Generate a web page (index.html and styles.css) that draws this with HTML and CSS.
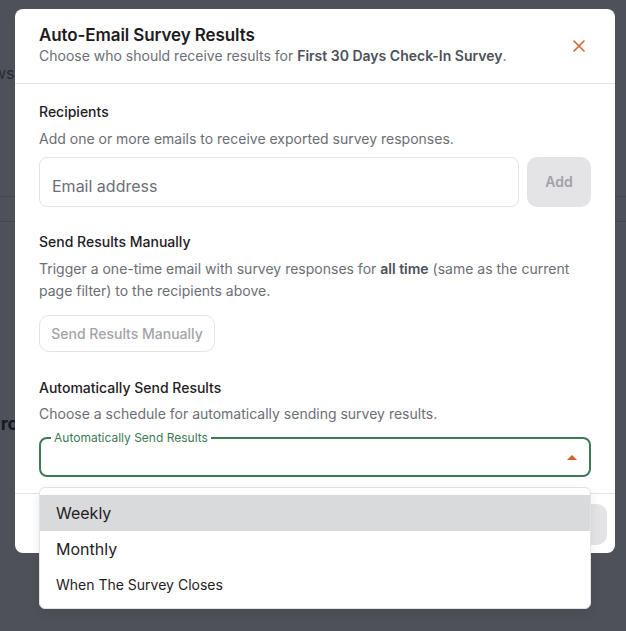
FILE: index.html
```html
<!DOCTYPE html>
<html lang="en">
<head>
<meta charset="utf-8">
<title>Auto-Email Survey Results</title>
<link rel="stylesheet" href="styles.css">
</head>
<body>
<div class="page">
  <div class="page-tabs"><span class="page-tab">Views</span></div>
  <div class="page-band"></div>
  <div class="page-row"></div>
  <div class="page-heading">Pro</div>
</div>
<div class="overlay"></div>
<div class="modal" role="dialog">
  <div class="modal-header">
    <div class="header-text">
      <h2 class="modal-title">Auto-Email Survey Results</h2>
      <p class="modal-subtitle">Choose who should receive results for <strong>First 30 Days Check-In Survey</strong>.</p>
    </div>
    <button class="close-btn" aria-label="Close">
      <svg width="12" height="12" viewBox="0 0 12 12"><path d="M1 1L11 11M11 1L1 11" stroke="#d4652f" stroke-width="1.6" stroke-linecap="round" fill="none"/></svg>
    </button>
  </div>
  <div class="modal-body">
    <section class="section">
      <h3 class="section-title">Recipients</h3>
      <p class="section-desc">Add one or more emails to receive exported survey responses.</p>
      <div class="email-row">
        <div class="email-input">Email address</div>
        <button class="add-btn">Add</button>
      </div>
    </section>
    <section class="section">
      <h3 class="section-title">Send Results Manually</h3>
      <p class="section-desc">Trigger a one-time email with survey responses for <strong>all time</strong> (same as the current page filter) to the recipients above.</p>
      <button class="outline-btn">Send Results Manually</button>
    </section>
    <section class="section section-last">
      <h3 class="section-title">Automatically Send Results</h3>
      <p class="section-desc">Choose a schedule for automatically sending survey results.</p>
      <div class="select-field">
        <fieldset class="select-outline"><legend class="select-legend">Automatically Send Results</legend></fieldset>
        <span class="select-arrow"></span>
      </div>
    </section>
  </div>
  <div class="modal-footer">
    <button class="footer-btn">Cancel</button>
    <button class="footer-btn">Save</button>
  </div>
</div>
<ul class="menu" role="listbox">
  <li class="menu-item menu-item-active">Weekly</li>
  <li class="menu-item">Monthly</li>
  <li class="menu-item menu-item-small">When The Survey Closes</li>
</ul>
</body>
</html>
```
FILE: styles.css
```css
* { box-sizing: border-box; }
html, body { margin: 0; padding: 0; }
body {
  width: 626px;
  height: 631px;
  overflow: hidden;
  font-family: Inter, "Noto Sans", sans-serif;
  background: #ffffff;
  position: relative;
}
.page {
  width: 626px;
  height: 631px;
  display: flex;
  flex-direction: column;
  padding-top: 62px;
  color: #111;
}
.page-tabs {
  display: flex;
  margin-left: -31px;
  font-size: 16px;
  line-height: 22px;
  color: #666;
}
.page-band {
  margin-top: 112px;
  height: 26px;
  border-top: 1px solid #d4d4d8;
  border-bottom: 1px solid #d4d4d8;
  background: #fff;
}
.page-row { height: 190px; }
.page-heading {
  margin-left: -11px;
  font-size: 18px;
  line-height: 24px;
  font-weight: 700;
  color: #222;
}
.overlay {
  position: absolute;
  inset: 0;
  background: rgba(20, 23, 33, 0.75);
}
.modal {
  position: absolute;
  left: 15px;
  top: 9px;
  width: 600px;
  height: 544px;
  background: #fff;
  border-radius: 8px;
  display: flex;
  flex-direction: column;
  overflow: hidden;
}
.modal-header {
  display: flex;
  align-items: center;
  justify-content: space-between;
  padding: 15px 24px 17px 24px;
  border-bottom: 1px solid #e4e4e7;
}
.modal-title {
  margin: 0;
  font-size: 17px;
  line-height: 22px;
  font-weight: 600;
  color: #1c1c21;
  letter-spacing: -0.1px;
}
.modal-subtitle {
  margin: 0;
  font-size: 14px;
  line-height: 20px;
  color: #6b6e76;
}
.modal-subtitle strong { font-weight: 600; color: #4d5058; }
.close-btn {
  border: 0;
  background: none;
  padding: 0;
  width: 12px;
  height: 12px;
  margin-right: 6px;
  margin-top: 2px;
  display: flex;
}
.modal-body {
  padding: 18px 24px 16px 24px;
  display: flex;
  flex-direction: column;
  gap: 25px;
  border-bottom: 1px solid #e4e4e7;
}
.section { display: flex; flex-direction: column; }
.section-last { margin-top: 1px; }
.section-title {
  margin: 0;
  font-size: 14px;
  line-height: 20px;
  font-weight: 500;
  color: #1f2024;
}
.section-desc {
  margin: 6px 0 0 0;
  font-size: 14px;
  line-height: 22px;
  color: #6b6e76;
}
.section-last .section-desc { margin-top: 5px; }
.section-desc strong { font-weight: 600; color: #4d5058; }
.email-row {
  margin-top: 7px;
  display: flex;
  gap: 8px;
}
.email-input {
  flex: 1;
  height: 50px;
  border: 1px solid #e4e4e7;
  border-radius: 8px;
  padding: 0 12px;
  display: flex;
  align-items: center;
  padding-top: 7px;
  font-size: 16px;
  color: #6b6f78;
}
.add-btn {
  width: 64px;
  height: 50px;
  border: 0;
  border-radius: 10px;
  background: #e4e4e7;
  color: #a1a1aa;
  font-family: inherit;
  font-size: 14px;
  font-weight: 600;
  padding-bottom: 2px;
}
.outline-btn {
  margin-top: 13px;
  align-self: flex-start;
  width: 176px;
  height: 37px;
  border: 1px solid #e4e4e7;
  border-radius: 10px;
  background: #fff;
  color: #a3a4aa;
  font-family: inherit;
  font-size: 14px;
  font-weight: 500;
}
.select-field {
  margin-top: 13px;
  position: relative;
  height: 39px;
}
.select-outline {
  position: absolute;
  inset: -6px 0 0 0;
  margin: 0;
  padding: 0 10px;
  border: 2px solid #3d7a57;
  border-radius: 8px;
}
.select-legend {
  padding: 0 3px;
  font-size: 12px;
  line-height: 12px;
  color: #3d7a57;
}
.select-arrow {
  position: absolute;
  right: 14px;
  top: 17px;
  width: 0;
  height: 0;
  border-left: 5px solid transparent;
  border-right: 5px solid transparent;
  border-bottom: 5px solid #d35f28;
}
.modal-footer {
  display: flex;
  justify-content: flex-end;
  gap: 8px;
  padding: 10px 8px 8px 8px;
}
.footer-btn {
  height: 41px;
  width: 90px;
  border: 0;
  border-radius: 10px;
  background: #e4e4e7;
  color: #a1a1aa;
  font-family: inherit;
  font-size: 14px;
  font-weight: 600;
}
.menu {
  position: absolute;
  left: 39px;
  top: 487px;
  width: 552px;
  margin: 0;
  padding: 7px 0 7px 0;
  list-style: none;
  background: #fff;
  border: 1px solid #e2e2e8;
  border-radius: 6px;
  box-shadow: 0 4px 12px rgba(0, 0, 0, 0.08);
}
.menu-item {
  height: 36px;
  display: flex;
  align-items: center;
  padding: 0 16px;
  font-size: 16px;
  color: #1f2024;
}
.menu-item-active { background: #d9dadc; }
.menu-item-small { font-size: 14px; height: 34px; }
```
